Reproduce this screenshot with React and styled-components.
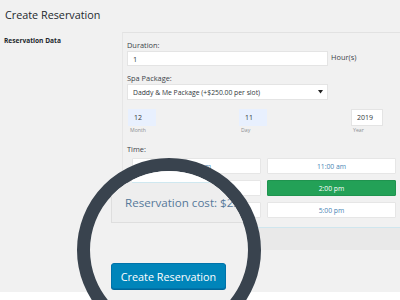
import React from 'react'
import styled, { createGlobalStyle } from 'styled-components'

const GlobalStyle = createGlobalStyle`
html, body {
  margin: 0;
  padding: 0;
  background: #f1f1f1;
}
body {
  font-family: 'Open Sans', 'Liberation Sans', sans-serif;
}
`

const Page = styled.div`
position: relative;
width: 400px;
height: 300px;
overflow: hidden;
background: #f1f1f1;
display: flex;
flex-direction: column;
`

const Title = styled.h1`
margin: 0;
box-sizing: border-box;
height: 32px;
padding: 7px 0 0 5px;
font-size: 10.8px;
line-height: 16px;
font-weight: 400;
color: #23282d;
`

const FormRow = styled.div`
display: flex;
`

const RowLabel = styled.div`
width: 122px;
box-sizing: border-box;
padding: 4px 0 0 4px;
font-size: 6.6px;
line-height: 10px;
font-weight: 700;
color: #23282d;
`

const Panel = styled.div`
flex: 1;
display: flex;
flex-direction: column;
padding: 7px 0 9px 4px;
border-top: 1px solid #e2e2e2;
border-left: 1px solid #e6e6e6;
border-bottom: 1px solid #cfe6ee;
`

const Label = styled.div`
font-size: 7.4px;
line-height: 10px;
color: #3c434a;
margin-top: ${p => p.$gap || 0}px;
`

const InputRow = styled.div`
display: flex;
align-items: flex-start;
gap: 3px;
margin-top: 1px;
`

const TextBox = styled.div`
box-sizing: border-box;
width: ${p => p.$w}px;
height: ${p => p.$h || 15}px;
display: flex;
align-items: center;
justify-content: space-between;
padding: 0 4px 0 5px;
background: ${p => (p.$auto ? '#e8f0fe' : '#ffffff')};
border: 1px solid ${p => (p.$auto ? '#e8f0fe' : '#e4e4e4')};
font-size: ${p => p.$fs || 7.4}px;
color: #32373c;
`

const Unit = styled.span`
font-size: 7.4px;
line-height: 10px;
margin-top: 1px;
color: #3c434a;
`

const DateGrid = styled.div`
display: grid;
grid-template-columns: 111px 112px 1fr;
margin-top: 9px;
padding-left: 1px;
`

const DateField = styled.div`
display: flex;
flex-direction: column;
`

const SmallLabel = styled.div`
font-size: 5.2px;
line-height: 8px;
padding-left: 2px;
color: #8c8f94;
`

const TimeGrid = styled.div`
display: grid;
grid-template-columns: 129px 129px;
grid-auto-rows: 16px;
gap: 6px;
margin: 4px 0 0 5px;
`

const Slot = styled.div`
box-sizing: border-box;
display: flex;
align-items: center;
justify-content: center;
font-size: 6.8px;
background: ${p => (p.$active ? '#23a157' : '#ffffff')};
border: 1px solid ${p => (p.$active ? '#1f944f' : '#e6e6e6')};
color: ${p => (p.$active ? '#ffffff' : '#4a86b5')};
border-radius: 1px;
`

const Band = styled.div`
margin-left: 122px;
height: 22px;
background: #e9e9e9;
`

const Spacer = styled.div`
flex: 1;
`

const Footer = styled.div`
height: 8px;
background: #ffffff;
`

const Lens = styled.div`
position: absolute;
left: 77px;
top: 158px;
width: 184px;
height: 184px;
box-sizing: border-box;
border: 13px solid #39434e;
border-radius: 50%;
overflow: hidden;
background: #f1f1f1;
display: flex;
flex-direction: column;
align-items: flex-start;
`

const LensSlot = styled.div`
flex: none;
margin-left: 42px;
width: 220px;
height: 11px;
background: #ffffff;
border-bottom: 1px solid #cfe8f0;
`

const CostBox = styled.div`
flex: none;
box-sizing: border-box;
margin-left: 21px;
width: 300px;
height: 40px;
padding-left: 13px;
display: flex;
align-items: center;
background: #eeeeee;
border: 1px solid #dedede;
border-top: none;
font-size: 11.6px;
color: #56799a;
white-space: nowrap;
`

const CreateButton = styled.button`
flex: none;
margin: 40px 0 0 21px;
width: 115px;
height: 26px;
padding: 0;
border: 1px solid #0073aa;
border-radius: 3px;
background: #0085ba;
box-shadow: 0 1px 0 #006799;
color: #ffffff;
font-family: 'Open Sans', 'Liberation Sans', sans-serif;
font-size: 10.8px;
`

const Caret = () => (
  <svg width="5" height="4" viewBox="0 0 5 4">
    <polygon points="0,0 5,0 2.5,3.5" fill="#222" />
  </svg>
)

const slots = [
  { t: '10:00 am' },
  { t: '11:00 am' },
  { t: '1:00 pm' },
  { t: '2:00 pm', active: true },
  { t: '4:00 pm' },
  { t: '5:00 pm' },
]

const App = () => {
  return (
    <Page>
      <GlobalStyle />
      <Title>Create Reservation</Title>
      <FormRow>
        <RowLabel>Reservation Data</RowLabel>
        <Panel>
          <Label>Duration:</Label>
          <InputRow>
            <TextBox $w={201}>1</TextBox>
            <Unit>Hour(s)</Unit>
          </InputRow>
          <Label $gap={7}>Spa Package:</Label>
          <InputRow>
            <TextBox $w={201} $h={16} $fs={6.8}>
              Daddy &amp; Me Package (+$250.00 per slot)
              <Caret />
            </TextBox>
          </InputRow>
          <DateGrid>
            <DateField>
              <TextBox $w={28} $h={17} $auto $fs={7}>12</TextBox>
              <SmallLabel>Month</SmallLabel>
            </DateField>
            <DateField>
              <TextBox $w={28} $h={17} $auto $fs={7}>11</TextBox>
              <SmallLabel>Day</SmallLabel>
            </DateField>
            <DateField>
              <TextBox $w={32} $h={17} $fs={7}>2019</TextBox>
              <SmallLabel>Year</SmallLabel>
            </DateField>
          </DateGrid>
          <Label $gap={10}>Time:</Label>
          <TimeGrid>
            {slots.map(s => (
              <Slot key={s.t} $active={s.active}>{s.t}</Slot>
            ))}
          </TimeGrid>
        </Panel>
      </FormRow>
      <Band />
      <Spacer />
      <Footer />
      <Lens>
        <LensSlot />
        <CostBox>Reservation cost: $250.00</CostBox>
        <CreateButton>Create Reservation</CreateButton>
      </Lens>
    </Page>
  )
}

export default App
